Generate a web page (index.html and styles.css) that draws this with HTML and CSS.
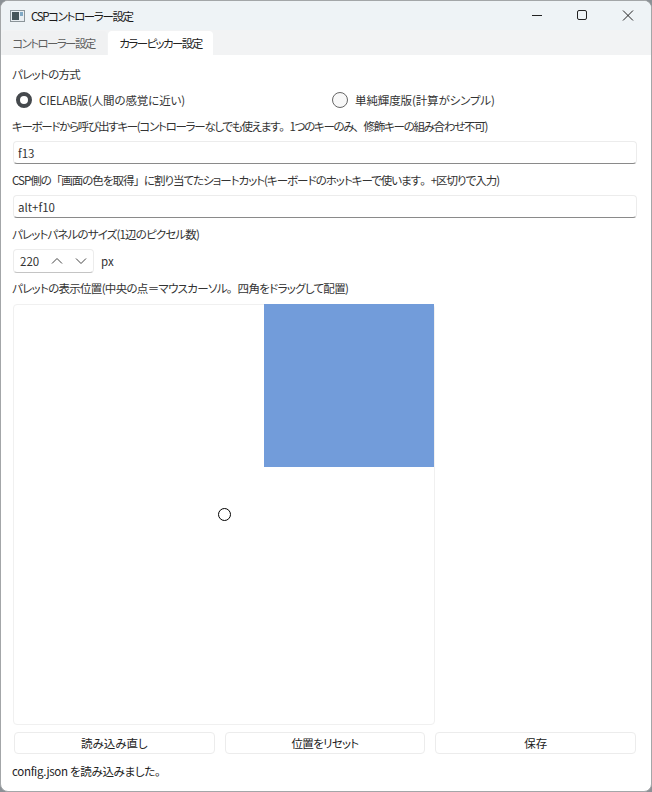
FILE: index.html
```html
<!DOCTYPE html>
<html lang="ja">
<head>
    <meta charset="utf-8">
    <title>CSPコントローラー設定</title>
    <link rel="stylesheet" href="styles.css">
</head>
<body>
    <div class="window">
        <div class="titlebar">
            <svg class="app-icon" width="15" height="12" viewBox="0 0 15 12">
                <rect x="0.5" y="0.5" width="14" height="11" fill="#e8eef2" stroke="#8a9499"/>
                <rect x="2" y="2" width="7" height="8" fill="#46555a"/>
                <rect x="10" y="2" width="3" height="4" fill="#7fa8c4"/>
            </svg>
            <span class="title">CSPコントローラー設定</span>
            <div class="caption-buttons">
                <svg width="46" height="30" viewBox="0 0 46 30"><path d="M19 14.5h10" stroke="#222" fill="none"/></svg>
                <svg width="46" height="30" viewBox="0 0 46 30"><rect x="18.5" y="9.5" width="9" height="9" rx="1.5" stroke="#222" fill="none"/></svg>
                <svg width="46" height="30" viewBox="0 0 46 30"><path d="M18 9.5l10 10M28 9.5l-10 10" stroke="#222" fill="none"/></svg>
            </div>
        </div>
        <div class="tabs">
            <div class="tab">コントローラー設定</div>
            <div class="tab active">カラーピッカー設定</div>
        </div>
        <div class="content">
            <div class="label label-first">パレットの方式</div>
            <div class="radio-row">
                <label class="radio-item">
                    <span class="radio checked"></span>CIELAB版(人間の感覚に近い)
                </label>
                <label class="radio-item">
                    <span class="radio"></span>単純輝度版(計算がシンプル)
                </label>
            </div>
            <div class="label label-tighter">キーボードから呼び出すキー(コントローラーなしでも使えます<span class="fw">。</span>1つのキーのみ<span class="fw">、</span>修飾キーの組み合わせ不可)</div>
            <div class="input">f13</div>
            <div class="label label-tight">CSP側の<span class="fw">「</span>画面の色を取得<span class="fw">」</span>に割り当てたショートカット(キーボードのホットキーで使います<span class="fw">。</span>+区切りで入力)</div>
            <div class="input">alt+f10</div>
            <div class="label label-size">パレットパネルのサイズ(1辺のピクセル数)</div>
            <div class="spin-row">
                <div class="spinbox">
                    <span class="spin-value">220</span>
                    <svg width="12" height="8" viewBox="0 0 12 8"><path d="M1 6.5l5-5 5 5" stroke="#444" fill="none"/></svg>
                    <svg class="spin-down" width="12" height="8" viewBox="0 0 12 8"><path d="M1 1.5l5 5 5-5" stroke="#444" fill="none"/></svg>
                </div>
                <span class="unit">px</span>
            </div>
            <div class="label label-pos">パレットの表示位置(中央の点＝マウスカーソル<span class="fw">。</span>四角をドラッグして配置)</div>
            <div class="preview">
                <div class="palette"></div>
                <div class="cursor-dot"></div>
            </div>
            <div class="buttons">
                <button class="btn">読み込み直し</button>
                <button class="btn btn-kana">位置をリセット</button>
                <button class="btn">保存</button>
            </div>
            <div class="status">config.json を読み込みました。</div>
        </div>
    </div>
</body>
</html>
```

FILE: styles.css
```css
html, body {
    margin: 0;
    padding: 0;
    height: 100%;
    background-color: #8b9196;
}

* {
    box-sizing: border-box;
}

.window {
    width: 652px;
    height: 792px;
    display: flex;
    flex-direction: column;
    background-color: #fff;
    border: 1px solid #a3a6a8;
    border-radius: 8px;
    overflow: hidden;
    font-family: "Noto Sans CJK JP", "Noto Sans", sans-serif;
    font-size: 11.5px;
    font-feature-settings: "palt";
    color: #333;
}

.titlebar {
    height: 29px;
    display: flex;
    align-items: center;
    padding-left: 9px;
    background-color: #eef3f6;
    color: #1a1a1a;
}

.app-icon {
    margin-right: 6px;
}

.title {
    flex: 1;
    letter-spacing: -1.35px;
}

.caption-buttons {
    display: flex;
}

.tabs {
    height: 25px;
    display: flex;
    align-items: flex-end;
    padding-left: 1px;
    background-color: #f2f3f4;
}

.tab {
    width: 105px;
    height: 24px;
    margin-right: 1px;
    padding-right: 2px;
    text-align: center;
    line-height: 24px;
    letter-spacing: -1.6px;
    color: #5f5f5f;
    background-color: #f0f1f2;
    border-radius: 4px 4px 0 0;
}

.tab.active {
    padding-right: 0;
    color: #222;
    background-color: #fff;
}

.content {
    flex: 1;
    display: flex;
    flex-direction: column;
    padding: 0 14px 0 11px;
}

.label {
    height: 18px;
    margin-top: 6px;
    line-height: 18px;
    white-space: nowrap;
    letter-spacing: -0.7px;
}

.label-first {
    margin-top: 10px;
}

.label-tight {
    letter-spacing: -1px;
}

.label-tighter {
    letter-spacing: -1.27px;
}

.label-size {
    letter-spacing: -0.85px;
}

.label-pos {
    letter-spacing: -0.7px;
}

.fw {
    font-feature-settings: normal;
}

.radio-row {
    display: flex;
    height: 22px;
    margin-top: 6px;
    align-items: center;
    letter-spacing: -0.12px;
}

.radio-item {
    flex: none;
    width: 316px;
    display: flex;
    align-items: center;
    padding-left: 4px;
}

.radio {
    width: 16px;
    height: 16px;
    margin-right: 7px;
    border: 1px solid #666;
    border-radius: 50%;
    background-color: #f8f8f8;
}

.radio.checked {
    border: 4px solid #45494d;
    background-color: #fff;
}

.input {
    height: 23px;
    margin-top: 6px;
    margin-bottom: 1px;
    margin-left: 1px;
    padding-left: 4px;
    line-height: 22px;
    background-color: #fff;
    border: 1px solid #ececec;
    border-bottom: 1px solid #8a8a8a;
    border-radius: 4px;
}

.spin-row {
    display: flex;
    align-items: center;
    margin-top: 6px;
}

.spinbox {
    width: 81px;
    height: 24px;
    margin-left: 1px;
    display: flex;
    align-items: center;
    padding-left: 6px;
    background-color: #fff;
    border: 1px solid #ececec;
    border-bottom: 1px solid #c4c4c4;
    border-radius: 4px;
}

.spin-value {
    width: 22px;
    margin-right: 9px;
}

.spin-down {
    margin-left: 12px;
}

.unit {
    margin-left: 7px;
}

.preview {
    position: relative;
    width: 422px;
    height: 421px;
    margin-top: 7px;
    margin-left: 1px;
    background-color: #fff;
    border: 1px solid #f0f0f0;
    border-radius: 4px;
}

.palette {
    position: absolute;
    left: 250px;
    top: -1px;
    width: 170px;
    height: 163px;
    background-color: #729cda;
}

.cursor-dot {
    position: absolute;
    left: 204px;
    top: 203px;
    width: 13px;
    height: 13px;
    border: 1px solid #000;
    border-radius: 50%;
}

.buttons {
    display: flex;
    gap: 10px;
    margin-top: 7px;
    margin-left: 2px;
    margin-right: 1px;
}

.btn {
    flex: 1;
    height: 22px;
    padding: 0;
    font: inherit;
    font-feature-settings: inherit;
    color: #222;
    background-color: #fff;
    border: 1px solid #ececec;
    border-radius: 4px;
}

.btn-kana {
    letter-spacing: -0.7px;
}

.status {
    margin-top: 8px;
    line-height: 18px;
    letter-spacing: -0.3px;
    color: #222;
}
```
